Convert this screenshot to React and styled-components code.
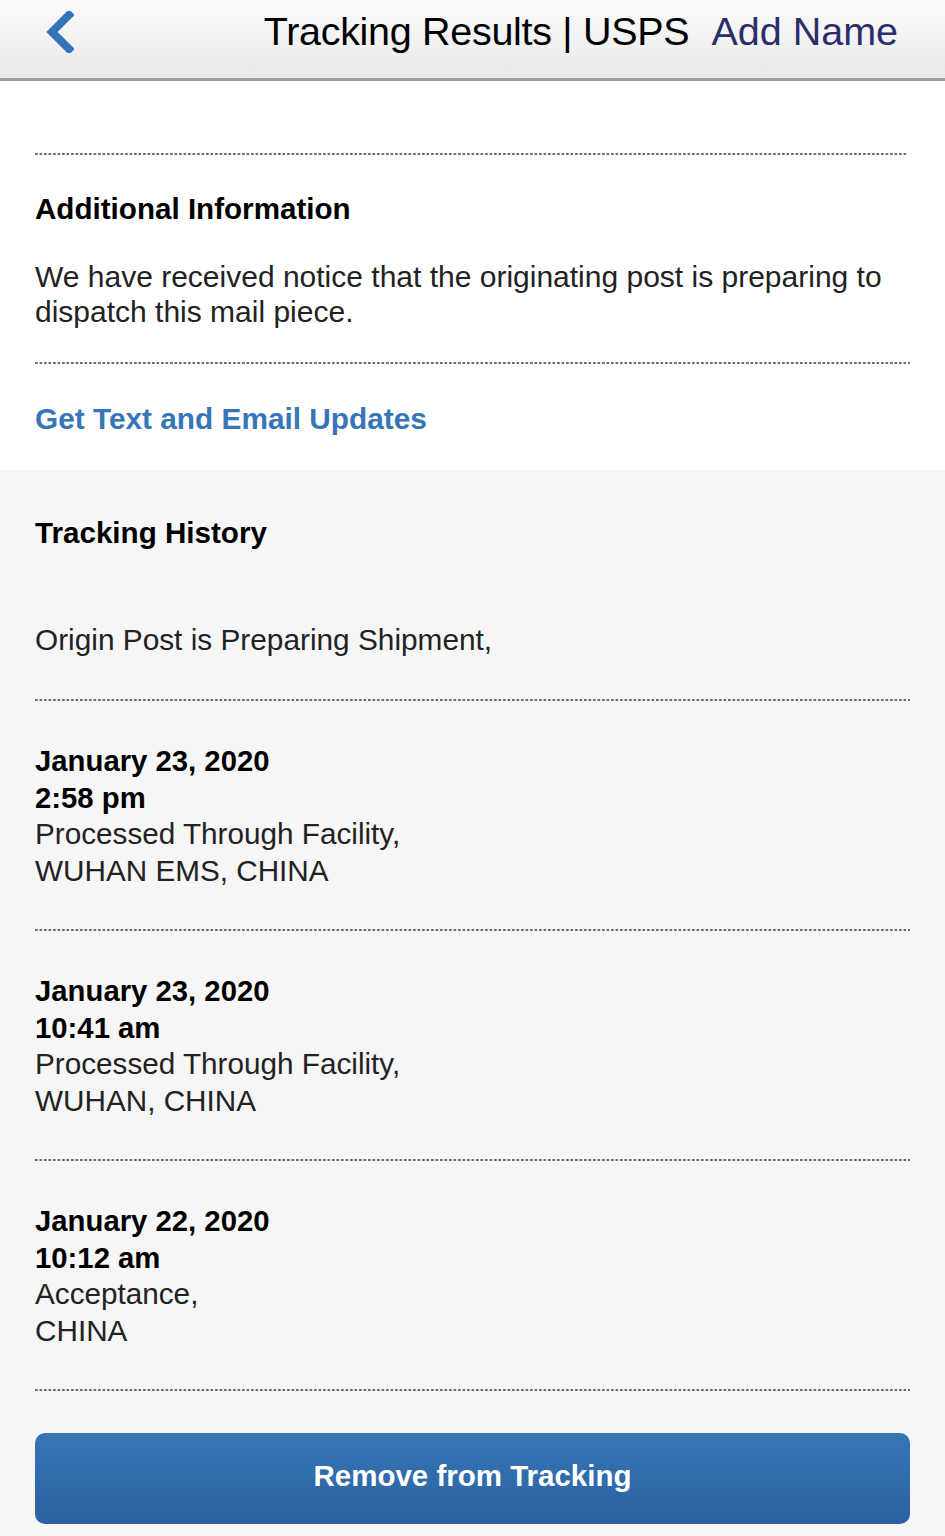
import React from "react";
import styled, { createGlobalStyle } from "styled-components";

const Global = createGlobalStyle`
  html, body { margin: 0; padding: 0; background: #f6f6f6; }
  body { font-family: "Liberation Sans", Arial, Helvetica, sans-serif; -webkit-font-smoothing: antialiased; }
  * { box-sizing: border-box; }
`;

const Page = styled.div`
  width: 945px;
  min-height: 1536px;
  background: #f6f6f6;
  display: flex;
  flex-direction: column;
`;

const Header = styled.header`
  height: 81px;
  display: flex;
  align-items: center;
  padding: 0 47px 14px 44px;
  background: linear-gradient(#fbfbfb, #e9e9e9);
  border-bottom: 3px solid #9c9c9c;
`;

const BackButton = styled.button`
  border: 0;
  background: none;
  padding: 0;
  margin: 0;
  display: flex;
  align-items: center;
  cursor: pointer;
`;

const Title = styled.h1`
  margin: 0 0 0 auto;
  font-size: 39.5px;
  font-weight: 400;
  color: #000;
  letter-spacing: -0.3px;
  line-height: 1;
`;

const HeaderLink = styled.a`
  margin-left: 22px;
  font-size: 39.5px;
  color: #2c2e6c;
  text-decoration: none;
  line-height: 1;
`;

const WhiteSection = styled.section`
  background: #fff;
  padding: 72px 35px 33px;
`;

const GreySection = styled.section`
  background: #f6f6f6;
  padding: 45px 35px 12px;
`;

const Dotted = styled.div`
  height: 2px;
  background-image: linear-gradient(to right, #6e6e6e 55%, transparent 55%);
  background-size: 4.5px 2px;
  background-repeat: repeat-x;
  margin-right: ${(p) => (p.$short ? "2px" : "0")};
`;

const Heading = styled.h2`
  margin: ${(p) => p.$mt || "0"} 0 0;
  font-size: 29.6px;
  font-weight: 700;
  color: #000;
  line-height: 36px;
`;

const Paragraph = styled.p`
  margin: 32px 0 33px;
  font-size: 30px;
  line-height: 35px;
  color: #222;
`;

const UpdatesLink = styled.a`
  display: block;
  margin-top: 37px;
  font-size: 29.8px;
  font-weight: 700;
  line-height: 36px;
  color: #3676b6;
  text-decoration: none;
`;

const Status = styled.p`
  margin: 71px 0 41px;
  font-size: 29.8px;
  line-height: 36px;
  color: #222;
`;

const Entry = styled.div`
  padding: 42px 0 40px;
  display: flex;
  flex-direction: column;
`;

const EntryLine = styled.div`
  font-size: ${(p) => (p.$bold ? "29.3px" : "29.7px")};
  line-height: 36.5px;
  font-weight: ${(p) => (p.$bold ? 700 : 400)};
  color: ${(p) => (p.$bold ? "#000" : "#222")};
`;

const RemoveButton = styled.button`
  margin-top: 42px;
  width: 100%;
  height: 91px;
  padding: 0 0 6px;
  border: 0;
  border-radius: 10px;
  background: linear-gradient(#3676b5, #2b61a0);
  color: #fff;
  font-family: "Liberation Sans", Arial, sans-serif;
  font-size: 29.5px;
  font-weight: 700;
  line-height: 1;
  cursor: pointer;
`;

const events = [
  { date: "January 23, 2020", time: "2:58 pm", desc: "Processed Through Facility,", loc: "WUHAN EMS, CHINA" },
  { date: "January 23, 2020", time: "10:41 am", desc: "Processed Through Facility,", loc: "WUHAN, CHINA" },
  { date: "January 22, 2020", time: "10:12 am", desc: "Acceptance,", loc: "CHINA" },
];

export default function App() {
  return (
    <Page>
      <Global />
      <Header>
        <BackButton aria-label="Back">
          <svg width="30" height="42" viewBox="0 0 30 42">
            <path d="M25 4 L8 21 L25 38" fill="none" stroke="#3574b8" strokeWidth="8" strokeLinecap="square" />
          </svg>
        </BackButton>
        <Title>Tracking Results | USPS</Title>
        <HeaderLink href="#">Add Name</HeaderLink>
      </Header>

      <WhiteSection>
        <Dotted $short />
        <Heading $mt="36px">Additional Information</Heading>
        <Paragraph>
          We have received notice that the originating post is preparing to dispatch this mail piece.
        </Paragraph>
        <Dotted />
        <UpdatesLink href="#">Get Text and Email Updates</UpdatesLink>
      </WhiteSection>

      <GreySection>
        <Heading>Tracking History</Heading>
        <Status>Origin Post is Preparing Shipment,</Status>
        <Dotted />
        {events.map((e, i) => (
          <React.Fragment key={i}>
            <Entry>
              <EntryLine $bold>{e.date}</EntryLine>
              <EntryLine $bold>{e.time}</EntryLine>
              <EntryLine>{e.desc}</EntryLine>
              <EntryLine>{e.loc}</EntryLine>
            </Entry>
            <Dotted />
          </React.Fragment>
        ))}
        <RemoveButton>Remove from Tracking</RemoveButton>
      </GreySection>
    </Page>
  );
}
